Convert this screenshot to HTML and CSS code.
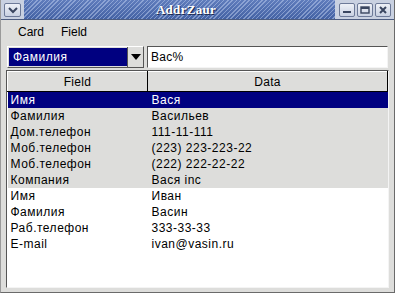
FILE: index.html
```html
<!DOCTYPE html>
<html lang="ru">
<head>
  <meta charset="UTF-8">
  <title>AddrZaur</title>
  <link rel="stylesheet" href="styles.css">
</head>
<body>
  <div class="window">
    <div class="titlebar">
      <div class="tb-side">
        <span class="tb-btn wide">
          <svg width="10" height="8" viewBox="0 0 10 8"><path d="M1 2 L5 6 L9 2" fill="none" stroke="#3a4660" stroke-width="2"/></svg>
        </span>
      </div>
      <div class="title">AddrZaur</div>
      <div class="tb-side right">
        <span class="tb-btn">
          <svg width="10" height="8" viewBox="0 0 10 8"><rect x="1" y="5" width="8" height="2" fill="#3a4660"/></svg>
        </span>
        <span class="tb-btn">
          <svg width="10" height="8" viewBox="0 0 10 8"><rect x="1" y="1" width="8" height="6" fill="none" stroke="#3a4660" stroke-width="1.4"/><rect x="1" y="1" width="8" height="2" fill="#3a4660"/></svg>
        </span>
        <span class="tb-btn">
          <svg width="10" height="8" viewBox="0 0 10 8"><path d="M2 1 L8 7 M8 1 L2 7" stroke="#3a4660" stroke-width="2"/></svg>
        </span>
      </div>
    </div>

    <div class="menubar">
      <span class="menu-item">Card</span>
      <span class="menu-item">Field</span>
    </div>

    <div class="searchbar">
      <div class="combo">
        <span class="combo-value">Фамилия</span>
        <span class="combo-arrow">
          <svg width="10" height="6" viewBox="0 0 10 6"><path d="M0 0 L10 0 L5 6 Z" fill="#000"/></svg>
        </span>
      </div>
      <div class="search-input">Вас%</div>
    </div>

    <div class="table-frame">
      <table class="cards">
        <thead>
          <tr>
            <th class="col-field">Field</th>
            <th>Data</th>
          </tr>
        </thead>
        <tbody>
          <tr class="row-gray selected"><td>Имя</td><td>Вася</td></tr>
          <tr class="row-gray"><td>Фамилия</td><td>Васильев</td></tr>
          <tr class="row-gray"><td>Дом.телефон</td><td>111-11-111</td></tr>
          <tr class="row-gray"><td>Моб.телефон</td><td>(223) 223-223-22</td></tr>
          <tr class="row-gray"><td>Моб.телефон</td><td>(222) 222-22-22</td></tr>
          <tr class="row-gray"><td>Компания</td><td>Вася inc</td></tr>
          <tr><td>Имя</td><td>Иван</td></tr>
          <tr><td>Фамилия</td><td>Васин</td></tr>
          <tr><td>Раб.телефон</td><td>333-33-33</td></tr>
          <tr><td>E-mail</td><td>ivan@vasin.ru</td></tr>
        </tbody>
      </table>
    </div>
  </div>
</body>
</html>
```

FILE: styles.css
```css
html, body {
  margin: 0;
  padding: 0;
}
body {
  font-family: "Liberation Sans", Arial, sans-serif;
  font-size: 12px;
  background: #dddddb;
}
.window {
  width: 395px;
  height: 293px;
  display: flex;
  flex-direction: column;
  background: #dddddb;
  box-sizing: border-box;
  border-left: 1px solid #9a9a9a;
  border-right: 1px solid #6a6a6a;
  border-bottom: 1px solid #6a6a6a;
}
.titlebar {
  height: 20px;
  display: flex;
  background: #c9d1e1;
  border-bottom: 1px solid #4c5c80;
  box-sizing: border-box;
}
.tb-side {
  display: flex;
  align-items: center;
  padding: 0 3px;
  gap: 2px;
}
.tb-side.right {
  padding: 0 3px 0 4px;
}
.tb-btn {
  width: 16px;
  height: 14px;
  box-sizing: border-box;
  border: 1px solid #6d7a98;
  border-radius: 2px;
  background: linear-gradient(#eef1f7, #c9d1e2);
  display: flex;
  align-items: center;
  justify-content: center;
}
.tb-btn.wide {
  width: 17px;
}
.title {
  flex: 1;
  display: flex;
  align-items: center;
  justify-content: center;
  background:
    repeating-linear-gradient(135deg, rgba(200,215,245,0.45) 0 1px, transparent 1px 3px),
    linear-gradient(#5f7cbc, #4462a4);
  color: #fff;
  font-family: "Liberation Serif", "Times New Roman", serif;
  font-weight: bold;
  font-size: 13px;
  letter-spacing: 0.3px;
  text-shadow: 1px 1px 0 #1c2a50;
  padding-left: 13px;
}
.menubar {
  height: 24px;
  display: flex;
  align-items: center;
  padding-left: 17px;
  gap: 17px;
}
.menu-item {
  color: #000;
}
.searchbar {
  display: flex;
  gap: 3px;
  padding: 2px 6px 2px 6px;
}
.combo {
  width: 137px;
  height: 22px;
  box-sizing: border-box;
  display: flex;
  border: 1px solid;
  border-color: #ffffff #555 #555 #ffffff;
  background: #dddddb;
}
.combo-value {
  flex: 1;
  background: #000080;
  color: #fff;
  margin: 1px 0 1px 1px;
  padding-left: 4px;
  display: flex;
  align-items: center;
  letter-spacing: 0.5px;
}
.combo-arrow {
  width: 15px;
  display: flex;
  align-items: center;
  justify-content: center;
  border-left: 1px solid #555;
}
.search-input {
  flex: 1;
  height: 22px;
  box-sizing: border-box;
  background: #fff;
  border: 1px solid;
  border-color: #555 #f4f4f4 #f4f4f4 #555;
  padding-left: 3px;
  display: flex;
  align-items: center;
  letter-spacing: 0.3px;
}
.table-frame {
  flex: 1;
  margin: 0 5px 4px 5px;
  border: 1px solid;
  border-color: #555 #f4f4f4 #f4f4f4 #555;
  background: #fff;
  overflow: hidden;
}
.cards {
  width: 100%;
  border-collapse: collapse;
  table-layout: fixed;
}
.cards th {
  height: 20px;
  padding: 0;
  font-weight: normal;
  background: #dddddb;
  box-sizing: border-box;
  border-top: 1px solid #fff;
  border-left: 1px solid #fff;
  border-right: 1px solid #000;
  border-bottom: 1px solid #000;
  text-align: center;
  letter-spacing: 0.3px;
}
.cards th.col-field {
  width: 140px;
}
.cards td {
  height: 16px;
  padding: 0 0 0 3px;
  white-space: nowrap;
  line-height: 16px;
  letter-spacing: 0.5px;
}
.cards td + td {
  padding-left: 4px;
}
.row-gray td {
  background: #dddddb;
}
.selected td {
  background: #000080;
  color: #fff;
}
```
